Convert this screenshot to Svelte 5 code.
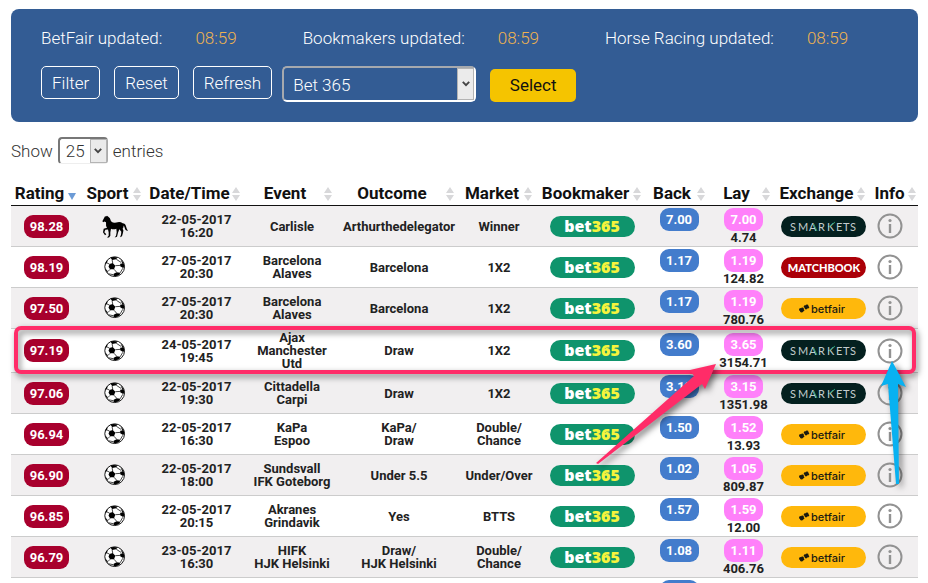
<script lang="ts">
	type Bet = {
		rating: string
		sport: 'horse' | 'football'
		date: string
		time: string
		event: string[]
		outcome: string[]
		market: string[]
		back: string
		lay: string
		liquidity: string
		exchange: 'smarkets' | 'matchbook' | 'betfair'
	}

	const updates = [
		{ label: 'BetFair updated:', time: '08:59' },
		{ label: 'Bookmakers updated:', time: '08:59' },
		{ label: 'Horse Racing updated:', time: '08:59' }
	]

	const columns = [
		{ name: 'Rating', width: 71 },
		{ name: 'Sport', width: 65 },
		{ name: 'Date/Time', width: 99 },
		{ name: 'Event', width: 92 },
		{ name: 'Outcome', width: 122 },
		{ name: 'Market', width: 78 },
		{ name: 'Bookmaker', width: 109 },
		{ name: 'Back', width: 64 },
		{ name: 'Lay', width: 65 },
		{ name: 'Exchange', width: 95 },
		{ name: 'Info', width: 47 }
	]

	const bets: Bet[] = [
		{ rating: '98.28', sport: 'horse', date: '22-05-2017', time: '16:20', event: ['Carlisle'], outcome: ['Arthurthedelegator'], market: ['Winner'], back: '7.00', lay: '7.00', liquidity: '4.74', exchange: 'smarkets' },
		{ rating: '98.19', sport: 'football', date: '27-05-2017', time: '20:30', event: ['Barcelona', 'Alaves'], outcome: ['Barcelona'], market: ['1X2'], back: '1.17', lay: '1.19', liquidity: '124.82', exchange: 'matchbook' },
		{ rating: '97.50', sport: 'football', date: '27-05-2017', time: '20:30', event: ['Barcelona', 'Alaves'], outcome: ['Barcelona'], market: ['1X2'], back: '1.17', lay: '1.19', liquidity: '780.76', exchange: 'betfair' },
		{ rating: '97.19', sport: 'football', date: '24-05-2017', time: '19:45', event: ['Ajax', 'Manchester', 'Utd'], outcome: ['Draw'], market: ['1X2'], back: '3.60', lay: '3.65', liquidity: '3154.71', exchange: 'smarkets' },
		{ rating: '97.06', sport: 'football', date: '22-05-2017', time: '19:30', event: ['Cittadella', 'Carpi'], outcome: ['Draw'], market: ['1X2'], back: '3.10', lay: '3.15', liquidity: '1351.98', exchange: 'smarkets' },
		{ rating: '96.94', sport: 'football', date: '22-05-2017', time: '16:30', event: ['KaPa', 'Espoo'], outcome: ['KaPa/', 'Draw'], market: ['Double/', 'Chance'], back: '1.50', lay: '1.52', liquidity: '13.93', exchange: 'betfair' },
		{ rating: '96.90', sport: 'football', date: '22-05-2017', time: '18:00', event: ['Sundsvall', 'IFK Goteborg'], outcome: ['Under 5.5'], market: ['Under/Over'], back: '1.02', lay: '1.05', liquidity: '809.87', exchange: 'betfair' },
		{ rating: '96.85', sport: 'football', date: '22-05-2017', time: '20:15', event: ['Akranes', 'Grindavik'], outcome: ['Yes'], market: ['BTTS'], back: '1.57', lay: '1.59', liquidity: '12.00', exchange: 'betfair' },
		{ rating: '96.79', sport: 'football', date: '23-05-2017', time: '16:30', event: ['HIFK', 'HJK Helsinki'], outcome: ['Draw/', 'HJK Helsinki'], market: ['Double/', 'Chance'], back: '1.08', lay: '1.11', liquidity: '406.76', exchange: 'betfair' }
	]

	let bookmaker = $state('Bet 365')
	let pageSize = $state('25')
</script>

{#snippet chevron()}
	<span class="drop" aria-hidden="true">
		<svg width="8" height="6" viewBox="0 0 8 6"><path d="M0.8 0.9 L4 4.2 L7.2 0.9" fill="none" stroke="#444" stroke-width="1.9" /></svg>
	</span>
{/snippet}

{#snippet lines(parts: string[])}
	{#each parts as part}
		<div>{part}</div>
	{/each}
{/snippet}

{#snippet horse()}
	<svg class="horse" width="26" height="23" viewBox="0 0 78 68" role="img" aria-label="Horse racing">
		<path d="M9 3 L12 4 L15 2 L18 4 Q25 8 27 18 Q34 24 43 22 Q54 18 62 24 Q70 24 72 33 Q74 42 78 47 Q70 48 68 38 Q67 33 65 31 Q65 37 62 41 Q66 46 63 53 L60 63 L54 66 L57 59 L58 50 L52 42 L48 53 L45 65 L38 67 L42 62 L44 51 L43 41 Q34 44 27 41 L25 52 L25 62 L21 67 L15 67 L20 62 L20 51 L18 43 L10 44 L7 51 L13 57 L9 60 L3 51 L5 41 L15 38 Q11 32 12 21 L7 19 L4 21 L1 18 L7 7 Z" />
	</svg>
{/snippet}

{#snippet football()}
	<svg class="ball" width="22" height="22" viewBox="0 0 68 68" role="img" aria-label="Football">
		<circle cx="33" cy="33" r="30.5" fill="#fff" stroke="#111" stroke-width="3" />
		<path d="M17 25 L27 22 L35 30 L31 41 L19 41 L14 33 Z M20 5 Q30 1 41 5 L38 10 L25 12 Z M51 11 Q62 20 63 33 L59 37 L50 32 L50 24 L57 23 Z M30 55 L39 50 L50 52 L48 58 Q39 64 30 62 Z M4 39 L10 45 L14 55 Q6 49 4 39 Z M4 26 L7 17 L12 12 L9 22 Z" />
		<path d="M25 12 L27 22 M38 10 L53 20 M35 30 L50 29 M31 41 L39 50 M19 41 L12 48 M17 25 L8 21 M50 52 L58 38 M14 55 L30 58" fill="none" stroke="#111" stroke-width="2.4" />
	</svg>
{/snippet}

{#snippet exchangeLogo(name: string)}
	{#if name === 'smarkets'}
		<svg class="logo" width="85" height="21" viewBox="0 0 85 21">
			<rect width="85" height="21" rx="10.5" fill="#04201f" />
			<text class="smarkets" x="9 17 28 37 46 55 62 69" y="15">SMARKETS</text>
			<path d="M32.5 8 L36 15 M48 11 L54 6" stroke="#1e9c70" fill="none" />
		</svg>
	{:else if name === 'matchbook'}
		<svg class="logo" width="85" height="21" viewBox="0 0 85 21">
			<rect width="85" height="21" rx="10.5" fill="#ab0008" />
			<text class="matchbook" x="43" y="15" text-anchor="middle">MATCHBOOK</text>
		</svg>
	{:else}
		<svg class="logo" width="85" height="21" viewBox="0 0 85 21">
			<rect width="85" height="21" rx="10.5" fill="#ffb80c" />
			<g fill="#1b1b12">
				<circle cx="19.6" cy="11.6" r="1.6" />
				<circle cx="21.4" cy="10.8" r="1.4" />
				<circle cx="20.6" cy="13.2" r="1.4" />
				<circle cx="22" cy="12.2" r="1.2" />
				<circle cx="24.2" cy="8.6" r="1.4" />
				<circle cx="26" cy="7.8" r="1.4" />
				<circle cx="25" cy="10" r="1.4" />
				<circle cx="26.8" cy="9.2" r="1.3" />
			</g>
			<text class="betfair" x="30" y="15">betfair</text>
		</svg>
	{/if}
{/snippet}

<main>
	<header class="panel">
		<div class="updates">
			{#each updates as update}
				<div class="update">
					<span>{update.label}</span>
					<time>{update.time}</time>
				</div>
			{/each}
		</div>
		<div class="controls">
			<button class="outline">Filter</button>
			<button class="outline">Reset</button>
			<button class="outline">Refresh</button>
			<div class="picker bookmaker">
				<select aria-label="Bookmaker" bind:value={bookmaker}>
					<option>Bet 365</option>
				</select>
				{@render chevron()}
			</div>
			<button class="primary">Select</button>
		</div>
	</header>

	<div class="length">
		<label for="page-size">Show</label>
		<div class="picker page-size">
			<select id="page-size" bind:value={pageSize}>
				<option>25</option>
			</select>
			{@render chevron()}
		</div>
		<span>entries</span>
	</div>

	<div class="results">
		<table>
			<colgroup>
				{#each columns as column}
					<col style="width: {column.width}px" />
				{/each}
			</colgroup>
			<thead>
				<tr>
					{#each columns as column, i}
						<th scope="col">
							<button class="sort">
								<span>{column.name}</span>
								<svg width="8" height="14" viewBox="0 0 8 14" aria-hidden="true">
									{#if i === 0}
										<path d="M0 6 H8 L4 13 Z" fill="#6c9bd6" />
									{:else}
										<path d="M0 6 L4 0 L8 6 Z M0 8 H8 L4 14 Z" fill="#d8d8da" />
									{/if}
								</svg>
							</button>
						</th>
					{/each}
				</tr>
			</thead>
			<tbody>
				{#each bets as bet}
					<tr>
						<td><span class="pill rating">{bet.rating}</span></td>
						<td>
							{#if bet.sport === 'horse'}
								{@render horse()}
							{:else}
								{@render football()}
							{/if}
						</td>
						<td>{@render lines([bet.date, bet.time])}</td>
						<td>{@render lines(bet.event)}</td>
						<td>{@render lines(bet.outcome)}</td>
						<td>{@render lines(bet.market)}</td>
						<td>
							<svg class="logo" width="85" height="21" viewBox="0 0 85 21">
								<rect width="85" height="21" rx="10.5" fill="#0f946c" />
								<text class="bet365" x="42" y="16" text-anchor="middle">bet<tspan fill="#f6f43c">365</tspan></text>
							</svg>
						</td>
						<td class="price"><span class="pill back">{bet.back}</span></td>
						<td class="price"><span class="pill lay">{bet.lay}</span><div>{bet.liquidity}</div></td>
						<td>{@render exchangeLogo(bet.exchange)}</td>
						<td>
							<button class="info" aria-label="Info">
								<svg width="26" height="26" viewBox="0 0 26 26">
									<circle cx="13" cy="13" r="11.5" fill="none" stroke="#929292" stroke-width="2" />
									<path d="M13 11 V20" stroke="#929292" stroke-width="2.4" />
									<circle cx="13" cy="7.5" r="1.6" fill="#929292" />
								</svg>
							</button>
						</td>
					</tr>
				{/each}
				<!-- next row, prices still loading -->
				<tr>
					<td colspan="7"></td>
					<td class="price"><span class="pill back"></span></td>
					<td class="price"><span class="pill lay"></span></td>
					<td colspan="2"></td>
				</tr>
			</tbody>
		</table>

		<div class="highlight"></div>
		<svg class="arrows" width="340" height="150" viewBox="0 0 340 150" aria-hidden="true">
			<path d="M138 14 L112 20 L116 26 L18 113 L20 114 L124 34 L127 39 Z" fill="#ff2c68" />
			<path d="M314 11 L303 36 L310 34 L318 134 L321 134 L320 34 L328 37 Z" fill="#08b1f1" />
		</svg>
	</div>
</main>

<style>
	:global(body) {
		margin: 0;
		background: #fff;
	}

	main {
		padding: 9px 10px 0 11px;
		font-family: Roboto, "Liberation Sans", sans-serif;
		font-size: 17px;
		font-weight: 300;
		color: #333;
	}

	button, select {
		font: inherit;
		color: inherit;
		margin: 0;
		cursor: pointer;
	}

	.panel {
		padding: 19px 30px 20px;
		border-radius: 8px;
		background: #335c94;
		color: #fff;
	}

	.updates {
		display: flex;
		gap: 66px;
		line-height: 20px;
		white-space: nowrap;
	}

	.update {
		display: flex;
		gap: 33px;
	}

	time {
		color: #efb350;
	}

	.controls {
		display: flex;
		align-items: flex-start;
		gap: 14px;
		margin-top: 18px;
	}

	.outline {
		height: 33px;
		padding: 0 10px;
		border: 1px solid #fff;
		border-radius: 5px;
		background: none;
	}

	.primary {
		align-self: flex-end;
		width: 86px;
		height: 33px;
		padding: 0 0 2px;
		border: 0;
		border-radius: 5px;
		background: #f5c400;
		color: #111;
		font-weight: 400;
	}

	.picker {
		display: grid;
		box-sizing: border-box;
		border-style: solid;
	}

	.picker select {
		grid-area: 1 / 1;
		appearance: none;
		border: 0;
		background: none;
		outline-offset: 2px;
	}

	.picker option {
		color: #333;
	}

	.drop {
		grid-area: 1 / 1;
		justify-self: end;
		display: flex;
		align-items: center;
		justify-content: center;
		box-sizing: border-box;
		width: 17px;
		border: 1px solid #b4b4b4;
		background: #ebebeb;
		pointer-events: none;
	}

	.bookmaker {
		width: 194px;
		height: 36px;
		margin-left: -4px;
		border-width: 2px;
		border-color: #a6a9ae #fff #fff #a6a9ae;
		border-radius: 5px;
	}

	.bookmaker select {
		padding: 2px 24px 0 9px;
	}

	.length {
		display: flex;
		align-items: center;
		gap: 5px;
		margin-top: 15px;
	}

	.page-size {
		width: 50px;
		height: 27px;
		border-width: 2px 1px 1px 2px;
		border-color: #777 #aaa #eee #777;
		border-radius: 4px;
	}

	.page-size select {
		padding: 0 18px 0 6px;
	}

	.results {
		position: relative;
		margin-top: 16px;
	}

	table {
		width: 100%;
		table-layout: fixed;
		border-collapse: separate;
		border-spacing: 0;
		font-size: 13px;
		font-weight: 700;
		line-height: 13px;
		text-align: center;
		color: #222;
	}

	th {
		height: 25px;
		padding: 0;
		border-bottom: 1px solid #111;
	}

	.sort {
		display: flex;
		align-items: center;
		width: 100%;
		height: 25px;
		padding: 2px 6px 0 0;
		border: 0;
		background: none;
		font-size: 17px;
		font-weight: 700;
		color: #111;
	}

	th:last-child .sort {
		padding-right: 2px;
	}

	.sort span {
		flex: 1;
	}

	.sort svg {
		flex: none;
	}

	td {
		height: 36px;
		padding: 2px 0;
		border-bottom: 1px solid #ccc;
		white-space: nowrap;
	}

	td:last-child {
		padding-right: 9px;
	}

	tbody tr:nth-child(odd) {
		background: #f1eff0;
	}

	td svg {
		display: block;
		margin: 0 auto;
	}

	.pill {
		display: block;
		box-sizing: border-box;
		width: 39px;
		height: 23px;
		margin: 0 auto;
		padding: 5px 0;
		border-radius: 9px;
		color: #fff;
	}

	.rating {
		width: 45px;
		background: #a8002d;
	}

	.back {
		background: #437ccc;
	}

	.lay {
		background: #ff80fa;
	}

	.price .back {
		margin-bottom: 13px;
	}

	.info {
		display: block;
		margin: 0 auto;
		padding: 0;
		border: 0;
		background: none;
	}

	.bet365 {
		font: 800 16px "Open Sans", sans-serif;
		fill: #fff;
		stroke-width: 0;
	}

	.smarkets {
		font: 400 11px Lato, sans-serif;
		fill: #c3cdcd;
	}

	.matchbook {
		font: 900 11px Lato, sans-serif;
		fill: #fff;
	}

	.betfair {
		font: 500 11px Inter, sans-serif;
		fill: #1b1b12;
	}

	.highlight {
		position: absolute;
		top: 146px;
		left: 3px;
		right: 2px;
		box-sizing: border-box;
		height: 48px;
		border: 4px solid #ff2c68;
		border-radius: 7px;
		filter: drop-shadow(2px 3px 3px rgba(0, 0, 0, 0.5));
		pointer-events: none;
	}

	.arrows {
		position: absolute;
		top: 170px;
		right: 0;
		filter: drop-shadow(3px 3px 3px rgba(0, 0, 0, 0.5));
		pointer-events: none;
	}
</style>
